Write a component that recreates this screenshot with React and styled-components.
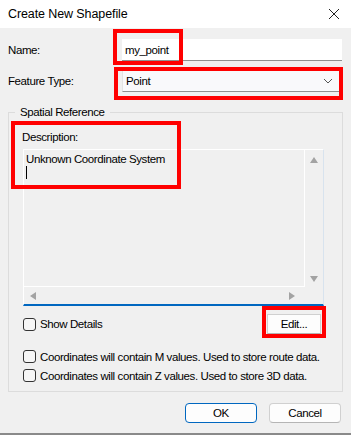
import styled, { createGlobalStyle } from "styled-components";

const Global = createGlobalStyle`
  html, body {
    margin: 0;
    padding: 0;
    background: #f0f0f0;
  }
  * {
    box-sizing: border-box;
  }
`;

const Window = styled.div`
  position: relative;
  width: 351px;
  height: 435px;
  background: #f0f0f0;
  font-family: "Liberation Sans", Arial, sans-serif;
  font-size: 11.5px;
  letter-spacing: -0.4px;
  line-height: 14px;
  color: #000;
  display: flex;
  flex-direction: column;
  border-bottom: 2px solid #8a8a8a;
`;

const TitleBar = styled.div`
  height: 28px;
  flex: none;
  background: #ffffff;
  display: flex;
  align-items: center;
  justify-content: space-between;
  padding: 0 11px 0 8px;
  font-size: 12.5px;
  letter-spacing: -0.1px;
`;

const CloseIcon = () => (
  <svg width="12" height="12" viewBox="0 0 12 12">
    <path d="M1 1 L11 11 M11 1 L1 11" stroke="#222" strokeWidth="1" />
  </svg>
);

const Body = styled.div`
  flex: 1;
  padding: 11px 8px 0 8px;
  display: flex;
  flex-direction: column;
`;

const FieldRow = styled.div`
  display: flex;
  align-items: center;
  height: 22px;
  margin-bottom: ${(p) => p.$gap || 0}px;
`;

const Label = styled.label`
  width: 114px;
  flex: none;
`;

const TextInput = styled.div`
  width: 220px;
  height: 22px;
  background: #ffffff;
  border-bottom: 1px solid #8f8f8f;
  display: flex;
  align-items: center;
  padding-left: 3px;
`;

const Select = styled(TextInput)`
  width: 218px;
  background: #f9f9fb;
  border: 1px solid #e3e3e3;
  border-bottom-color: #8f8f8f;
  justify-content: space-between;
  padding: 0 6px 0 3px;
`;

const Group = styled.fieldset`
  margin: 13px 0 0 0;
  padding: 11px 10px 9px 14px;
  border: 1px solid #dcdcdc;
  border-radius: 0;
`;

const Legend = styled.legend`
  margin-left: -8px;
  padding: 0 5px;
  line-height: 14px;
`;

const Caption = styled.div`
  margin: 0 0 5px -1px;
`;

const TextBox = styled.div`
  width: 301px;
  height: 157px;
  display: grid;
  grid-template-columns: 1fr 18px;
  grid-template-rows: 1fr 17px;
  border-top: 1px solid #ffffff;
  border-left: 1px solid #ffffff;
  border-right: 1px solid #d8e3ee;
  border-bottom: 2px solid #0067c0;
`;

const TextArea = styled.div`
  border-right: 1px solid #ffffff;
  border-bottom: 1px solid #ffffff;
  padding: 2px 2px;
  line-height: 14px;
`;

const Caret = styled.div`
  width: 1px;
  height: 13px;
  background: #000;
`;

const VScroll = styled.div`
  display: flex;
  flex-direction: column;
  justify-content: space-between;
  align-items: center;
  padding: 6px 0 4px;
`;

const HScroll = styled.div`
  display: flex;
  justify-content: space-between;
  align-items: center;
  padding: 0 9px 0 5px;
`;

const Arrow = ({ dir }) => {
  const pts = {
    up: "0,7 4,1 8,7",
    down: "0,1 8,1 4,7",
    left: "7,0 7,8 1,4",
    right: "1,0 1,8 7,4",
  }[dir];
  return (
    <svg width="8" height="8" viewBox="0 0 8 8">
      <polygon points={pts} fill="#a3a3a3" />
    </svg>
  );
};

const DetailsRow = styled.div`
  width: 301px;
  display: flex;
  justify-content: space-between;
  align-items: center;
  margin-top: 8px;
  padding-right: 3px;
`;

const Check = styled.div`
  display: flex;
  align-items: center;
  gap: 4px;
  height: 13px;
  white-space: nowrap;
  margin-top: ${(p) => p.$top || 0}px;
`;

const Box = styled.span`
  width: 13px;
  height: 13px;
  border: 1px solid #333;
  border-radius: 3px;
  background: #f6f6f6;
  flex: none;
`;

const Button = styled.button`
  font: inherit;
  letter-spacing: inherit;
  color: #000;
  height: 20px;
  width: ${(p) => p.$w || 72}px;
  background: #fdfdfd;
  border: 1px solid ${(p) => (p.$primary ? "#0067c0" : "#d0d0d0")};
  border-bottom-color: ${(p) => (p.$primary ? "#0067c0" : "#b5b5b5")};
  border-radius: ${(p) => (p.$square ? 0 : 4)}px;
  padding: 0;
`;

const Footer = styled.div`
  display: flex;
  justify-content: flex-end;
  gap: 12px;
  margin-top: 11px;
  padding-right: 2px;
`;

const Highlight = styled.div`
  position: absolute;
  border: 4px solid #ff0000;
  pointer-events: none;
`;

export default function App() {
  return (
    <>
      <Global />
      <Window>
        <TitleBar>
          <span>Create New Shapefile</span>
          <CloseIcon />
        </TitleBar>
        <Body>
          <FieldRow $gap={9}>
            <Label>Name:</Label>
            <TextInput>my_point</TextInput>
          </FieldRow>
          <FieldRow>
            <Label>Feature Type:</Label>
            <Select>
              <span>Point</span>
              <svg width="10" height="6" viewBox="0 0 10 6">
                <path d="M1 1 L5 5 L9 1" stroke="#555" fill="none" strokeWidth="1" />
              </svg>
            </Select>
          </FieldRow>
          <Group>
            <Legend>Spatial Reference</Legend>
            <Caption>Description:</Caption>
            <TextBox>
              <TextArea>
                Unknown Coordinate System
                <Caret />
              </TextArea>
              <VScroll>
                <Arrow dir="up" />
                <Arrow dir="down" />
              </VScroll>
              <HScroll>
                <Arrow dir="left" />
                <Arrow dir="right" />
              </HScroll>
              <div />
            </TextBox>
            <DetailsRow>
              <Check>
                <Box />
                <span>Show Details</span>
              </Check>
              <Button $square $w={54}>Edit...</Button>
            </DetailsRow>
            <Check $top={16}>
              <Box />
              <span>Coordinates will contain M values. Used to store route data.</span>
            </Check>
            <Check $top={6}>
              <Box />
              <span>Coordinates will contain Z values. Used to store 3D data.</span>
            </Check>
          </Group>
          <Footer>
            <Button $primary>OK</Button>
            <Button>Cancel</Button>
          </Footer>
        </Body>
        <Highlight style={{ left: 113, top: 29, width: 70, height: 36 }} />
        <Highlight style={{ left: 114, top: 67, width: 229, height: 33 }} />
        <Highlight style={{ left: 11, top: 121, width: 170, height: 68 }} />
        <Highlight style={{ left: 262, top: 306, width: 64, height: 32 }} />
      </Window>
    </>
  );
}
